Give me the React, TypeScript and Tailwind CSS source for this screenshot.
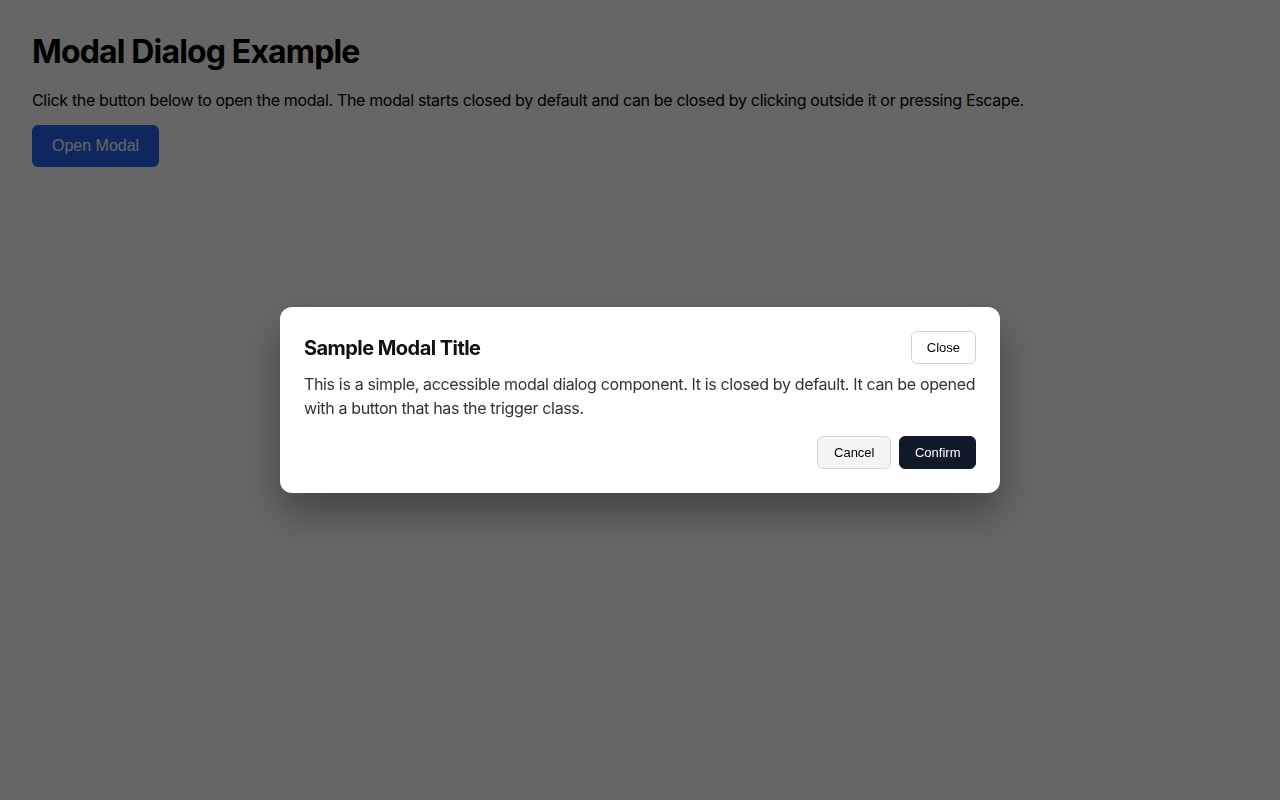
import { useEffect, useState } from "react";

export default function App() {
  const [open, setOpen] = useState(true);

  useEffect(() => {
    const onKey = (e: KeyboardEvent) => {
      if (e.key === "Escape") setOpen(false);
    };
    window.addEventListener("keydown", onKey);
    return () => window.removeEventListener("keydown", onKey);
  }, []);

  return (
    <div className="min-h-screen bg-white text-black font-['Inter','Noto_Sans',sans-serif]">
      {/* PAGE */}
      <main className="p-8">
        <h1 className="text-[32px] leading-10 font-bold tracking-[-0.85px]">
          Modal Dialog Example
        </h1>
        <p className="mt-4 text-base leading-6 tracking-[-0.33px]">
          Click the button below to open the modal. The modal starts closed by
          default and can be closed by clicking outside it or pressing Escape.
        </p>
        <button
          onClick={() => setOpen(true)}
          className="trigger mt-[13px] h-[42px] px-5 rounded-md bg-[#2563eb] text-white text-base font-['Liberation_Sans',Arial,sans-serif]"
        >
          Open Modal
        </button>
      </main>

      {/* OVERLAY + DIALOG */}
      {open && (
        <div
          onClick={() => setOpen(false)}
          className="fixed inset-0 bg-[rgba(0,0,0,0.6)] flex items-center justify-center"
        >
          <div
            role="dialog"
            aria-modal="true"
            aria-labelledby="modal-title"
            onClick={(e) => e.stopPropagation()}
            className="w-[720px] bg-white rounded-xl p-6 shadow-[0_20px_40px_rgba(0,0,0,0.35)]"
          >
            <div className="flex items-center justify-between">
              <h2
                id="modal-title"
                className="text-xl leading-7 font-bold tracking-[-0.55px] text-[#111]"
              >
                Sample Modal Title
              </h2>
              <button
                onClick={() => setOpen(false)}
                className="px-[15px] py-2 text-[13px] leading-[15px] rounded-md border border-[#d1d5db] bg-white text-black font-['Liberation_Sans',Arial,sans-serif]"
              >
                Close
              </button>
            </div>

            <p className="mt-2 text-base leading-6 tracking-[-0.35px] text-[#333]">
              This is a simple, accessible modal dialog component. It is closed
              by default. It can be opened with a button that has the trigger
              class.
            </p>

            <div className="mt-4 flex justify-end gap-2">
              <button
                onClick={() => setOpen(false)}
                className="px-4 py-2 text-[13px] leading-[15px] rounded-md border border-[#d1d5db] bg-[#f3f4f6] text-black font-['Liberation_Sans',Arial,sans-serif]"
              >
                Cancel
              </button>
              <button
                onClick={() => setOpen(false)}
                className="px-[14.5px] py-2 text-[13px] leading-[15px] rounded-md border border-[#111827] bg-[#111827] text-white font-['Liberation_Sans',Arial,sans-serif]"
              >
                Confirm
              </button>
            </div>
          </div>
        </div>
      )}
    </div>
  );
}
